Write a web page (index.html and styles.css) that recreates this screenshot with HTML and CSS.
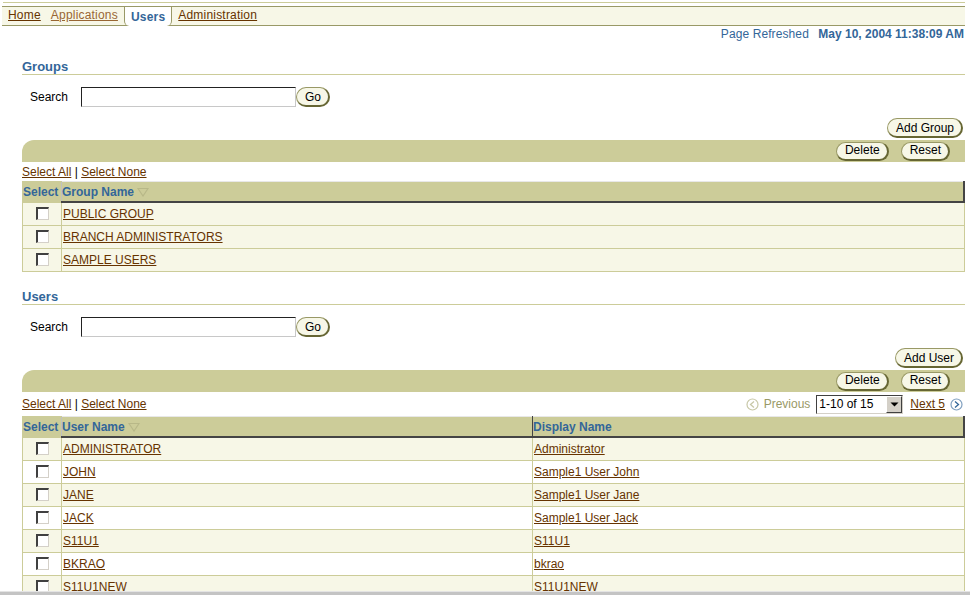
FILE: index.html
```html
<!DOCTYPE html>
<html lang="en">
<head>
    <meta charset="UTF-8">
    <title>Users</title>
    <link rel="stylesheet" href="styles.css">
</head>
<body>
    <div class="global">
        <div class="tabs">
            <a href="#" class="tab">Home</a>
            <a href="#" class="tab visited">Applications</a>
            <span class="tab current">Users</span>
            <a href="#" class="tab">Administration</a>
        </div>
    </div>

    <div class="refreshed">
        Page Refreshed <b>May 10, 2004 11:38:09 AM</b>
    </div>

    <div class="content">
        <h2>Groups</h2>
        <div class="search">
            <label>Search</label>
            <input type="text" class="field">
            <button class="btn">Go</button>
        </div>
        <div class="actions"><button class="btn">Add Group</button></div>
        <div class="bar">
            <button class="btn">Delete</button>
            <button class="btn">Reset</button>
        </div>
        <div class="selectrow">
            <span><a href="#">Select All</a> | <a href="#">Select None</a></span>
        </div>
        <table class="grid plain">
            <tr>
                <th class="sel">Select</th>
                <th class="col">Group Name <svg class="sort" width="12" height="10" viewBox="0 0 12 10"><path d="M1 1.5 H11 L6 9 Z" fill="none" stroke="#b8b888" stroke-width="1.2"/></svg></th>
            </tr>
            <tr><td class="sel"><span class="cb"></span></td><td><a href="#">PUBLIC GROUP</a></td></tr>
            <tr><td class="sel"><span class="cb"></span></td><td><a href="#">BRANCH ADMINISTRATORS</a></td></tr>
            <tr><td class="sel"><span class="cb"></span></td><td><a href="#">SAMPLE USERS</a></td></tr>
        </table>

        <h2 class="second">Users</h2>
        <div class="search">
            <label>Search</label>
            <input type="text" class="field">
            <button class="btn">Go</button>
        </div>
        <div class="actions"><button class="btn">Add User</button></div>
        <div class="bar">
            <button class="btn">Delete</button>
            <button class="btn">Reset</button>
        </div>
        <div class="selectrow paged">
            <span><a href="#">Select All</a> | <a href="#">Select None</a></span>
            <span class="pager">
                <svg width="13" height="13" viewBox="0 0 13 13"><circle cx="6.5" cy="6.5" r="5.5" fill="none" stroke="#c8c8a8" stroke-width="1.2"/><path d="M8 3.5 L4.5 6.5 L8 9.5" fill="none" stroke="#c8c8a8" stroke-width="1.3"/></svg>
                <span class="prev">Previous</span>
                <span class="dropdown">1-10 of 15<span class="arrow"><svg width="9" height="5" viewBox="0 0 9 5"><path d="M0.5 0.5 H8.5 L4.5 4.5 Z" fill="#000"/></svg></span></span>
                <a href="#">Next 5</a>
                <svg width="13" height="13" viewBox="0 0 13 13"><circle cx="6.5" cy="6.5" r="5.5" fill="none" stroke="#7f9fbf" stroke-width="1.2"/><path d="M5 3.5 L8.5 6.5 L5 9.5" fill="none" stroke="#336699" stroke-width="1.3"/></svg>
            </span>
        </div>
        <table class="grid striped">
            <tr>
                <th class="sel">Select</th>
                <th class="col name">User Name <svg class="sort" width="12" height="10" viewBox="0 0 12 10"><path d="M1 1.5 H11 L6 9 Z" fill="none" stroke="#b8b888" stroke-width="1.2"/></svg></th>
                <th class="col">Display Name</th>
            </tr>
            <tr><td class="sel"><span class="cb"></span></td><td><a href="#">ADMINISTRATOR</a></td><td><a href="#">Administrator</a></td></tr>
            <tr><td class="sel"><span class="cb"></span></td><td><a href="#">JOHN</a></td><td><a href="#">Sample1 User John</a></td></tr>
            <tr><td class="sel"><span class="cb"></span></td><td><a href="#">JANE</a></td><td><a href="#">Sample1 User Jane</a></td></tr>
            <tr><td class="sel"><span class="cb"></span></td><td><a href="#">JACK</a></td><td><a href="#">Sample1 User Jack</a></td></tr>
            <tr><td class="sel"><span class="cb"></span></td><td><a href="#">S11U1</a></td><td><a href="#">S11U1</a></td></tr>
            <tr><td class="sel"><span class="cb"></span></td><td><a href="#">BKRAO</a></td><td><a href="#">bkrao</a></td></tr>
            <tr><td class="sel"><span class="cb"></span></td><td><a href="#">S11U1NEW</a></td><td><a href="#">S11U1NEW</a></td></tr>
            <tr><td class="sel"><span class="cb"></span></td><td><a href="#">S11U2</a></td><td><a href="#">S11U2</a></td></tr>
        </table>
    </div>

    <div class="hscroll"></div>
</body>
</html>
```

FILE: styles.css
```css
html {
    overflow: hidden;
}

body {
    margin: 0;
    font-family: "Liberation Sans", Arial, sans-serif;
    font-size: 12px;
    color: #000;
    background: #fff;
}

a {
    color: #663300;
}

.global {
    margin: 0 5px 0 2px;
    padding-top: 1px;
    border-top: 1px solid #fff;
}

.global::before {
    content: "";
    display: block;
    height: 1px;
    margin-left: 1px;
    background: #cccc99;
}

.tabs {
    display: flex;
    align-items: stretch;
    height: 18px;
    margin-top: 3px;
    border-top: 1px solid #999966;
    border-bottom: 1px solid #999966;
    background: #f7f7e7;
    padding-left: 6px;
}

.tab {
    line-height: 17px;
    margin-right: 10px;
    letter-spacing: 0.2px;
}

.tab.visited {
    color: #996633;
    margin-right: 6px;
}

.tab.current {
    height: 19px;
    margin: 0 6px 0 0;
    padding: 0 6px 0 6px;
    background: #fff;
    border-left: 1px solid #999966;
    border-right: 1px solid #999966;
    border-radius: 0 0 5px 5px;
    color: #336699;
    font-weight: bold;
    line-height: 20px;
}

.refreshed {
    text-align: right;
    padding-right: 6px;
    height: 14px;
    line-height: 14px;
    margin-top: 1px;
    color: #336699;
    letter-spacing: 0.1px;
}

.refreshed b {
    margin-left: 6px;
    letter-spacing: 0;
}

.content {
    padding: 0 5px 0 22px;
}

h2 {
    margin: 17px 0 0;
    padding-top: 1px;
    font-size: 13px;
    line-height: 15px;
    color: #336699;
    border-bottom: 1px solid #cccc99;
}

h2.second {
    margin-top: 16px;
}

.search {
    display: flex;
    align-items: center;
    margin-top: 12px;
    height: 20px;
    padding-left: 8px;
}

.search label {
    width: 51px;
}

.field {
    box-sizing: border-box;
    width: 215px;
    height: 20px;
    margin: 0;
    border: 1px solid #c8c8c8;
    border-top-color: #222;
    border-left-color: #222;
    background: #fff;
}

.btn {
    box-sizing: border-box;
    height: 20px;
    margin: 0;
    padding: 0 7px 0 8px;
    font-family: inherit;
    font-size: 12px;
    color: #000;
    background: #f7f7e7;
    border: 1px solid #999966;
    border-right: 2px solid #666633;
    border-bottom: 2px solid #666633;
    border-radius: 10px;
    line-height: 16px;
}

.actions {
    display: flex;
    justify-content: flex-end;
    margin-top: 11px;
    padding-right: 2px;
}

.bar {
    display: flex;
    justify-content: flex-end;
    align-items: center;
    gap: 12px;
    height: 22px;
    margin-top: 2px;
    padding-right: 15px;
    background: #cccc99;
    border-top-left-radius: 12px;
}

.bar .btn {
    height: 19px;
    line-height: 15px;
}

.selectrow {
    display: flex;
    justify-content: space-between;
    align-items: center;
    height: 19px;
}

.selectrow.paged {
    height: 24px;
}

.pager {
    display: flex;
    align-items: center;
    padding-right: 2px;
}

.prev {
    color: #999966;
    margin: 0 6px 0 5px;
}

.dropdown {
    box-sizing: border-box;
    display: flex;
    align-items: center;
    justify-content: space-between;
    width: 87px;
    height: 19px;
    padding-left: 2px;
    margin-right: 7px;
    border: 1px solid #d4d0c8;
    border-top-color: #404040;
    border-left-color: #404040;
    background: #fff;
}

.dropdown .arrow {
    display: flex;
    align-items: center;
    justify-content: center;
    box-sizing: border-box;
    width: 16px;
    height: 17px;
    background: #d4d0c8;
    border: 1px solid #fff;
    border-right-color: #404040;
    border-bottom-color: #404040;
}

.pager a {
    margin-right: 5px;
}

.grid {
    width: 100%;
    border-collapse: collapse;
    border-left: 1px solid #cccc99;
    border-right: 1px solid #cccc99;
}

.grid th {
    height: 19px;
    padding: 0;
    background: #cccc99;
    color: #336699;
    text-align: left;
    white-space: nowrap;
}

.grid th.sel {
    width: 38px;
    border-top: 1px solid #cccc99;
    border-bottom: 1px solid #cccc99;
}

.grid th.col {
    border-top: 1px solid #e8e8e8;
    border-left: 1px solid #c0c0c0;
    border-bottom: 2px solid #444;
    border-right: 2px solid #444;
}

.grid th.name {
    width: 470px;
    border-right-width: 1px;
}

.grid th .sort {
    vertical-align: -1px;
}

.grid td {
    height: 22px;
    padding: 0 0 0 1px;
    border-bottom: 1px solid #cccc99;
    background: #f7f7e7;
}

.grid td + td {
    border-left: 1px solid #cccc99;
}

.striped tr:nth-child(odd) td {
    background: #fff;
}

.grid td.sel {
    padding: 0;
    text-align: center;
}

.cb {
    display: inline-block;
    box-sizing: border-box;
    width: 13px;
    height: 13px;
    margin-top: 2px;
    background: #fff;
    border: 1px solid #d4d0c8;
    border-top: 2px solid #404040;
    border-left: 2px solid #404040;
}

.hscroll {
    position: fixed;
    left: 0;
    right: 0;
    bottom: 0;
    height: 3px;
    background: #c4c4c4;
    border-top: 1px solid #e4e4e4;
}
```
